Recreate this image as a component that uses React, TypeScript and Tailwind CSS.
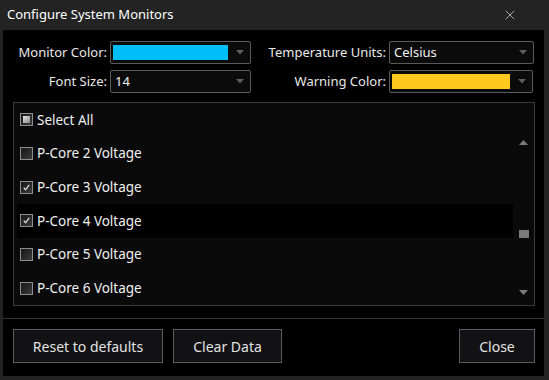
import { X } from "lucide-react";

type Item = { label: string; state: "on" | "off" | "mixed"; hot?: boolean };

const items: Item[] = [
  { label: "Select All", state: "mixed" },
  { label: "P-Core 2 Voltage", state: "off" },
  { label: "P-Core 3 Voltage", state: "on" },
  { label: "P-Core 4 Voltage", state: "on", hot: true },
  { label: "P-Core 5 Voltage", state: "off" },
  { label: "P-Core 6 Voltage", state: "off" },
];

function Check({ state }: { state: Item["state"] }) {
  return (
    <div className="w-[13px] h-[13px] border border-[#8e8e8e] bg-gradient-to-br from-[#161616] to-[#3c3c3c] flex items-center justify-center shrink-0">
      {state === "mixed" && (
        <div className="w-[7px] h-[7px] bg-gradient-to-br from-[#e6e6e6] to-[#8a8a8a]" />
      )}
      {state === "on" && (
        <svg width="9" height="9" viewBox="0 0 9 9">
          <path d="M1.8 4.8 L3.6 6.8 L7.2 1.8" stroke="#dcdcdc" strokeWidth="1.3" fill="none" />
        </svg>
      )}
    </div>
  );
}

function Arrow() {
  return (
    <svg width="8" height="5" viewBox="0 0 8 5" className="shrink-0">
      <path d="M0 0 L8 0 L4 4.5 Z" fill="#5e5e5e" />
    </svg>
  );
}

function Combo({ width, swatch, text }: { width: string; swatch?: string; text?: string }) {
  return (
    <div className={`${width} h-[23px] border border-[#5a5a5a] rounded-[2px] bg-[#0b0b0b] flex items-center pl-[2px] pr-[6px] gap-[8px]`}>
      {swatch ? (
        <div className={`flex-1 h-[15px] ${swatch}`} />
      ) : (
        <span className="flex-1 pl-[2px] text-[13px] text-[#f0f0f0]">{text}</span>
      )}
      <Arrow />
    </div>
  );
}

function Button({ label, width }: { label: string; width: string }) {
  return (
    <div className={`${width} h-[34px] border border-[#5c5c5c] bg-[#121214] flex items-center justify-center text-[14px] text-[#e2e2e2]`}>
      {label}
    </div>
  );
}

export default function App() {
  return (
    <div
      className="w-[549px] h-[380px] bg-[#232323] flex flex-col overflow-hidden"
      style={{ fontFamily: '"Noto Sans", "Open Sans", sans-serif' }}
    >
      {/* Title bar */}
      <div className="h-[30px] flex items-center justify-between pl-[7px] pr-[31px] text-[13px] text-white">
        <span>Configure System Monitors</span>
        <X size={16} strokeWidth={1.1} color="#dcdcdc" />
      </div>

      {/* Body */}
      <div className="flex-1 ml-[3px] mr-[5px] mb-[4px] bg-black flex flex-col">
        {/* Settings */}
        <div className="flex gap-[15px] pl-[10px] pt-[11px] text-[13px] text-[#e8e8e8]">
          <div className="grid grid-cols-[94px_141px] gap-x-[3px] gap-y-[6px] items-center">
            <span className="text-right">Monitor Color:</span>
            <Combo width="w-[141px]" swatch="bg-[#00bff8]" />
            <span className="text-right">Font Size:</span>
            <Combo width="w-[141px]" text="14" />
          </div>
          <div className="grid grid-cols-[120px_145px] gap-x-[3px] gap-y-[6px] items-center">
            <span className="text-right">Temperature Units:</span>
            <Combo width="w-[145px]" text="Celsius" />
            <span className="text-right">Warning Color:</span>
            <Combo width="w-[144px]" swatch="bg-[#ffc81e]" />
          </div>
        </div>

        {/* Monitor list */}
        <div className="mt-[9px] ml-[10px] mr-[9px] h-[204px] border border-[#3a3a3a] bg-[#0a0a0a] flex pl-[3px]">
          <div className="flex-1 flex flex-col">
            {items.map((it) => (
              <div
                key={it.label}
                className={`h-[33.67px] flex items-center gap-[4px] pl-[3px] text-[13.5px] text-[#f0f0f0] ${it.hot ? "bg-black" : ""}`}
              >
                <Check state={it.state} />
                <span>{it.label}</span>
              </div>
            ))}
          </div>
          <div className="w-[21px] flex flex-col items-center">
            <svg width="9" height="5" viewBox="0 0 9 5" className="mt-[37px]">
              <path d="M0 5 L9 5 L4.5 0 Z" fill="#7a7a7a" />
            </svg>
            <div className="mt-[85px] w-[10px] h-[8px] bg-[#7a7a7a]" />
            <svg width="9" height="5" viewBox="0 0 9 5" className="mt-[52px]">
              <path d="M0 0 L9 0 L4.5 5 Z" fill="#7a7a7a" />
            </svg>
          </div>
        </div>

        {/* Separator */}
        <div className="mt-[12px] h-px bg-[#333333]" />

        {/* Buttons */}
        <div className="flex items-center pt-[10px] pl-[10px] pr-[9px] gap-[10px]">
          <Button label="Reset to defaults" width="w-[150px]" />
          <Button label="Clear Data" width="w-[109px]" />
          <div className="flex-1" />
          <Button label="Close" width="w-[76px]" />
        </div>
      </div>
    </div>
  );
}
